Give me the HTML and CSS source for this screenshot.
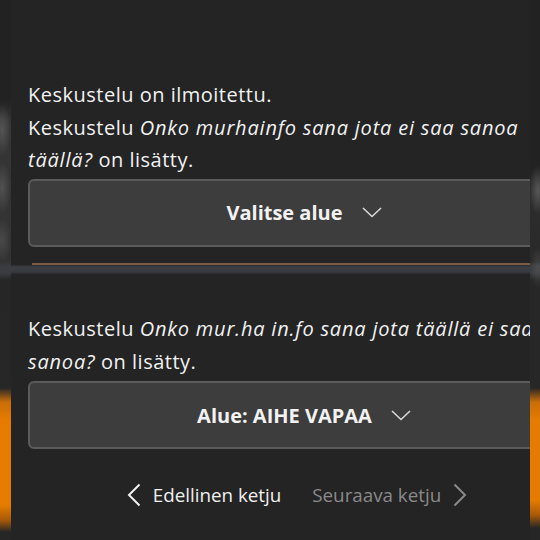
FILE: index.html
```html
<!DOCTYPE html>
<html lang="fi">
<head>
<meta charset="utf-8">
<title>Keskustelu</title>
<link rel="stylesheet" href="styles.css">
</head>
<body>
<div class="stage">
  <div class="edge edge-left"></div>
  <section class="panel panel-top">
    <p class="msg">Keskustelu on ilmoitettu.<br>Keskustelu <em>Onko murhainfo sana jota ei saa sanoa täällä?</em> on lisätty.</p>
    <button class="select">
      <span>Valitse alue</span>
      <svg class="chev-down" width="20" height="11" viewBox="0 0 20 11"><path d="M1 1 L10 9.5 L19 1" fill="none" stroke="#d8d8d8" stroke-width="1.6"/></svg>
    </button>
    <div class="rule"></div>
  </section>
  <div class="edge edge-right"></div>
  <div class="seam"></div>
  <section class="panel panel-bottom">
    <p class="msg">Keskustelu <em>Onko mur.ha in.fo sana jota täällä ei saa sanoa?</em> on lisätty.</p>
    <button class="select">
      <span>Alue: AIHE VAPAA</span>
      <svg class="chev-down" width="20" height="11" viewBox="0 0 20 11"><path d="M1 1 L10 9.5 L19 1" fill="none" stroke="#d8d8d8" stroke-width="1.6"/></svg>
    </button>
    <nav class="pager">
      <a class="prev">
        <svg width="14" height="24" viewBox="0 0 14 24"><path d="M12.5 1.5 L2 12 L12.5 22.5" fill="none" stroke="#f0f0f0" stroke-width="2"/></svg>
        <span>Edellinen ketju</span>
      </a>
      <a class="next">
        <span>Seuraava ketju</span>
        <svg width="14" height="24" viewBox="0 0 14 24"><path d="M1.5 1.5 L12 12 L1.5 22.5" fill="none" stroke="#8a8a8a" stroke-width="2"/></svg>
      </a>
    </nav>
  </section>
</div>
</body>
</html>
```
FILE: styles.css
```css
html, body {
  margin: 0;
  padding: 0;
  background: #202020;
}
body {
  width: 540px;
  height: 540px;
  overflow: hidden;
  font-family: "Open Sans", "Noto Sans", sans-serif;
  color: #f2f2f2;
}
.stage {
  display: grid;
  grid-template-columns: 11px 519px 10px;
  grid-template-rows: 265px 9px 266px;
  width: 540px;
  height: 540px;
}
.edge-left {
  grid-column: 1;
  grid-row: 1 / 4;
  background:
    radial-gradient(ellipse 9px 26px at 2px 130px, rgba(110,110,110,0.55), transparent),
    radial-gradient(ellipse 9px 26px at 2px 188px, rgba(110,110,110,0.5), transparent),
    radial-gradient(ellipse 9px 22px at 2px 240px, rgba(100,100,100,0.45), transparent),
    linear-gradient(to bottom, #222 0, #222 100px, #353535 120px, #333 262px, #3a3c40 266px, #3a3c40 273px, #262626 280px, #272727 388px, #c86d08 402px, #e57c00 420px, #e57c00 505px, #a85a08 520px, #262626 532px);
}
.edge-right {
  grid-column: 3;
  grid-row: 1 / 4;
  background:
    radial-gradient(ellipse 9px 24px at 8px 190px, rgba(120,120,120,0.6), transparent),
    radial-gradient(ellipse 8px 20px at 8px 268px, rgba(100,100,100,0.45), transparent),
    linear-gradient(to bottom, #222 0, #222 165px, #2c2c2c 200px, #2a2a2a 262px, #3a3c40 266px, #3a3c40 273px, #272727 280px, #272727 388px, #c86d08 402px, #e57c00 420px, #e57c00 500px, #a85a08 515px, #262626 528px);
}
.seam {
  grid-column: 2;
  grid-row: 2;
  background: linear-gradient(to bottom, #2a2c30 0, #3a3d42 2px, #383b40 7px, #2a2a2a 9px);
}
.panel {
  grid-column: 2;
  background: #242424;
  overflow: hidden;
  padding-left: 17px;
  box-sizing: border-box;
  display: flex;
  flex-direction: column;
  align-items: flex-start;
}
.panel-top {
  grid-row: 1;
  padding-top: 79px;
}
.panel-bottom {
  grid-row: 3;
  padding-top: 39px;
}
.msg {
  flex: none;
  margin: 0;
  font-size: 20px;
  line-height: 32.5px;
  width: 512px;
  letter-spacing: 0.5px;
}
.msg em {
  font-style: italic;
  letter-spacing: 0.8px;
}
.select {
  flex: none;
  margin-top: 2px;
  width: 552px;
  height: 68px;
  box-sizing: border-box;
  background: #3d3d3d;
  border: 2px solid #5b5b5b;
  border-radius: 6px;
  display: flex;
  align-items: center;
  justify-content: center;
  gap: 19px;
  font-family: "Open Sans", "Noto Sans", sans-serif;
  font-weight: 700;
  font-size: 20px;
  color: #f2f2f2;
  padding: 0;
}
.panel-bottom .select {
  margin-top: 3px;
}
.chev-down {
  display: block;
}
.rule {
  flex: none;
  margin-top: 16px;
  margin-left: 4px;
  width: 520px;
  height: 2px;
  background: #7d5a44;
}
.pager {
  flex: none;
  width: 538px;
  margin-top: 30px;
  display: flex;
  justify-content: center;
  gap: 31px;
  font-size: 18.8px;
  line-height: 32px;
}
.pager a {
  display: flex;
  align-items: center;
  gap: 12px;
}
.pager svg {
  display: block;
}
.prev {
  color: #f0f0f0;
}
.next {
  color: #8a8a8a;
}
```
